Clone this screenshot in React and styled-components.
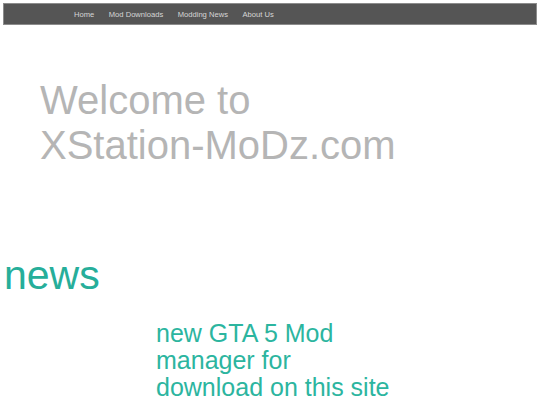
import React from 'react';
import styled, {createGlobalStyle} from 'styled-components';

const Global = createGlobalStyle`
  html, body {
    margin: 0;
    padding: 0;
    background: #ffffff;
    font-family: "Liberation Sans", Arial, sans-serif;
  }
`;

const Page = styled.div`
  padding: 3px;
`;

const Nav = styled.nav`
  display: flex;
  align-items: center;
  gap: 14.5px;
  height: 20px;
  padding-left: 70px;
  background-color: #555555;
  border: 1px solid #8c8c8c;
`;

const NavLink = styled.a`
  font-size: 7.6px;
  color: #d6d6d6;
  text-decoration: none;

  &:visited {
    color: #d6d6d6;
  }
`;

const Hero = styled.h1`
  margin: 53px 0 0 37px;
  font-size: 40px;
  line-height: 45px;
  font-weight: normal;
  color: #b5b5b5;
`;

const News = styled.section`
  margin-top: 85px;
`;

const NewsTitle = styled.h2`
  margin: 0 0 0 1px;
  font-size: 41px;
  line-height: 44px;
  font-weight: normal;
  color: #26ae9a;
`;

const NewsItem = styled.p`
  margin: 23px 0 0 153px;
  width: 240px;
  font-size: 25px;
  line-height: 27px;
  color: #2cb59f;
`;

const links = ['Home', 'Mod Downloads', 'Modding News', 'About Us'];

function App() {
  return (
      <Page>
        <Global/>
        <Nav>
          {links.map(l => (
              <NavLink key={l} href="#">{l}</NavLink>
          ))}
        </Nav>

        <Hero>
          Welcome to<br/>
          XStation-MoDz.com
        </Hero>

        <News>
          <NewsTitle>news</NewsTitle>
          <NewsItem>new GTA 5 Mod manager for download on this site</NewsItem>
        </News>
      </Page>
  );
}

export default App;
